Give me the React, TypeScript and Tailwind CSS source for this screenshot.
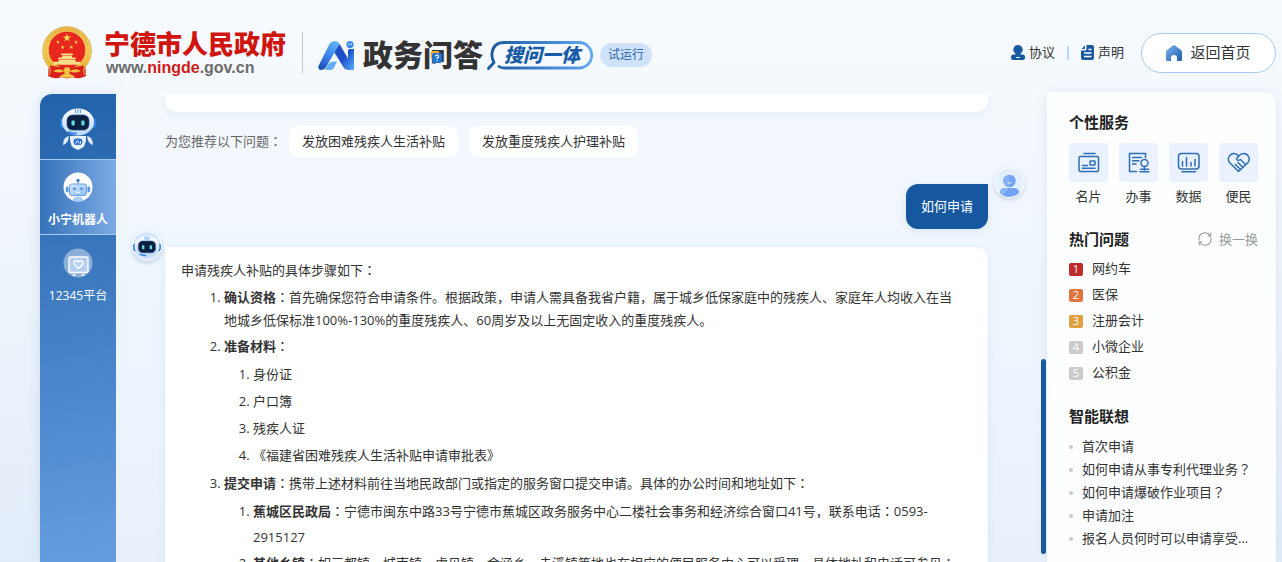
import React, { Fragment } from 'react';

const WIDE = /([：？])/;

/** Sets full-width colons and question marks in the middle of their cell. */
function Zh({ children }: { children: string }) {
  return (
    <>
      {children.split(WIDE).map((part, i) =>
        WIDE.test(part) ? (
          <span key={i} className="font-['Noto_Sans_CJK_JP',sans-serif] leading-none font-normal">
            {part}
          </span>
        ) : (
          <Fragment key={i}>{part}</Fragment>
        ),
      )}
    </>
  );
}

function Emblem() {
  return (
    <svg viewBox="0 0 50 53" className="h-[53px] w-[50px]" aria-hidden="true">
      <defs>
        <linearGradient id="gold" x1="0" y1="0" x2="0" y2="1">
          <stop offset="0" stopColor="#e8b64a" />
          <stop offset="0.5" stopColor="#f7cf58" />
          <stop offset="1" stopColor="#e6a92f" />
        </linearGradient>
      </defs>
      <path d="M7 36 L6 50 Q14 54 19 51 L25 52.5 L31 51 Q36 54 44 50 L43 36 Z" fill="#d9201c" />
      <circle cx="25" cy="25" r="24.4" fill="url(#gold)" stroke="#c9a24a" strokeWidth="0.6" />
      <circle cx="25" cy="25" r="21.3" fill="none" stroke="#dc9f31" strokeWidth="0.8" strokeDasharray="2 1.6" />
      <circle cx="25" cy="24" r="18.3" fill="#e8271f" />
      <path d="M25 7.6l1 3h3.2l-2.6 1.9 1 3.1-2.6-1.9-2.6 1.9 1-3.1-2.6-1.9h3.2z" fill="#ffd84f" />
      <g fill="#ffd84f">
        <path d="M16 14l.5 1.5H18l-1.2.9.4 1.5-1.2-.9-1.2.9.4-1.5-1.2-.9h1.5z" />
        <path d="M34 14l.5 1.5H36l-1.2.9.4 1.5-1.2-.9-1.2.9.4-1.5-1.2-.9h1.5z" />
        <path d="M20.6 19l.5 1.5h1.5l-1.2.9.4 1.5-1.2-.9-1.2.9.4-1.5-1.2-.9h1.5z" />
        <path d="M29.4 19l.5 1.5h1.5l-1.2.9.4 1.5-1.2-.9-1.2.9.4-1.5-1.2-.9h1.5z" />
      </g>
      <path d="M19.5 27.5h11l1 1.6h-13zM20 29.5h10v2H20zM17 31.5h16l1.2 1.6H15.8zM16.5 33.5h17v2.2h-17zM11 35.7h28l-1.6 3H12.6z" fill="#fbe08a" />
      <path d="M8 39.500 Q17 41.500 25 41.500 Q33 41.500 42 39.500 L41 50 Q34 52 25 50.500 Q16 52 9 50 Z" fill="#d9201c" />
      <circle cx="25" cy="44.500" r="3.300" fill="#f3c445" stroke="#d98f22" strokeWidth="0.7" />
      <path d="M11 45q6-3.500 11 0q-4 3-11 0zM39 45q-6-3.500-11 0q4 3 11 0zM17 50.500l8-4 8 4-8 1.500z" fill="#f3c445" />
      <path d="M8 42q1 5-1 7M42 42q-1 5 1 7" stroke="#f3c445" strokeWidth="1" fill="none" />
    </svg>
  );
}

function AiLogo() {
  return (
    <svg viewBox="0 0 36 29" className="h-[29px] w-9" aria-hidden="true">
      <defs>
        <linearGradient id="aiA" x1="0.7" y1="0" x2="0.2" y2="1">
          <stop offset="0" stopColor="#63b4fb" />
          <stop offset="0.55" stopColor="#3b82ee" />
          <stop offset="1" stopColor="#1d4fb4" />
        </linearGradient>
        <linearGradient id="aiB" x1="0" y1="0" x2="1" y2="1">
          <stop offset="0" stopColor="#2450c0" />
          <stop offset="0.5" stopColor="#1a4fc8" />
          <stop offset="1" stopColor="#5db0fb" />
        </linearGradient>
      </defs>
      <path d="M0.5 25 L11.5 3 Q13.5 0 16.5 0 Q20 0 21.5 3 L24 8 L18 14 L16.5 11.5 L7.5 27 Q5.5 29 3 29 Q-0.5 28.500 .5 25z" fill="url(#aiA)" />
      <path d="M21.500 3 L30 17.500 V9.500 Q30 8 32 8 H36 V29 H30.500 Q27 29 25.300 26 L16.500 11.500 Z" fill="url(#aiB)" />
      <path d="M9.500 24 Q12 20.500 16 20.500 H19 L15.500 27.500 Q14.500 29 12 29 H7 Z" fill="#62aefb" />
      <circle cx="32" cy="3.600" r="3.600" fill="#3e8bf0" />
      <circle cx="30.700" cy="3.200" r="0.700" fill="#fff" />
      <circle cx="33.400" cy="3.200" r="0.700" fill="#fff" />
    </svg>
  );
}

function SearchFrame() {
  return (
    <svg viewBox="0 0 106 29" className="absolute inset-0 h-full w-full" aria-hidden="true">
      <defs>
        <linearGradient id="frame" x1="0" y1="0" x2="1" y2="0">
          <stop offset="0" stopColor="#17579f" />
          <stop offset="1" stopColor="#63a8f3" />
        </linearGradient>
      </defs>
      <path
        d="M1.500 27.500 L7 21.500 Q4.500 17.500 5 12 Q6.500 1.500 17 1.500 H92 A12.500 12.500 0 0 1 92 27 H17 Q14 27 12 25.500"
        fill="none"
        stroke="url(#frame)"
        strokeWidth="2.800"
        strokeLinecap="round"
        strokeLinejoin="round"
      />
    </svg>
  );
}

function RobotFace({ id }: { id: string }) {
  return (
    <g>
      <defs>
        <linearGradient id={id} x1="0" y1="0" x2="0" y2="1">
          <stop offset="0" stopColor="#ffffff" />
          <stop offset="1" stopColor="#bcd8fb" />
        </linearGradient>
      </defs>
      <rect x="0" y="10" width="5" height="10" rx="2.500" fill="#2f7fe8" />
      <rect x="31" y="10" width="5" height="10" rx="2.500" fill="#2f7fe8" />
      <ellipse cx="18" cy="14" rx="16" ry="13.500" fill={`url(#${id})`} />
      <path d="M15.500 1.500v3.500M18 1v4.500M20.500 1.500v3.500" stroke="#5c9ff0" strokeWidth="1.200" />
      <rect x="7" y="7" width="22" height="15" rx="5.500" fill="#0b1f42" stroke="#26538f" strokeWidth="0.800" />
      <rect x="11.500" y="12.500" width="3.200" height="5" rx="1" fill="#5de0dc" />
      <rect x="21.300" y="12.500" width="3.200" height="5" rx="1" fill="#5de0dc" />
      <path d="M9 24 Q12 26 16 25.500" stroke="#2f7fe8" strokeWidth="1.800" fill="none" strokeLinecap="round" />
    </g>
  );
}

function RobotFull() {
  return (
    <svg viewBox="0 0 36 42" className="h-[42px] w-9" aria-hidden="true">
      <path d="M9 28 Q3 29 3 37 Q8 36 9 28zM27 28 Q33 29 33 37 Q28 36 27 28z" fill="#dfecfe" />
      <path d="M10 28 H26 Q27 40 18 42 Q9 40 10 28z" fill="#e9f2ff" />
      <rect x="13.500" y="30.500" width="9" height="6.500" rx="3" fill="#2f72d4" />
      <path d="M15.500 35.500l2-3 1.500 3M20.500 33v2.500" stroke="#fff" strokeWidth="0.900" fill="none" />
      <RobotFace id="headFull" />
    </svg>
  );
}

function RobotLight() {
  return (
    <svg viewBox="0 0 30 30" className="size-[30px]" aria-hidden="true">
      <defs>
        <clipPath id="disc">
          <circle cx="15" cy="15" r="14.500" />
        </clipPath>
        <linearGradient id="faceLight" x1="0" y1="0" x2="1" y2="1">
          <stop offset="0" stopColor="#d5e9ff" />
          <stop offset="1" stopColor="#8fbdf5" />
        </linearGradient>
      </defs>
      <circle cx="15" cy="15" r="14.500" fill="#fff" />
      <g clipPath="url(#disc)">
        <path d="M9.500 30 Q9.500 24.500 15 24.500 Q20.500 24.500 20.500 30z" fill="#a9cdf8" />
        <path d="M15 8v4" stroke="#5b98e6" strokeWidth="1" />
        <circle cx="15" cy="8.500" r="1.700" fill="#3f7fd6" />
        <rect x="2.800" y="14.500" width="2.800" height="6" rx="1.400" fill="#5b98e6" />
        <rect x="24.400" y="14.500" width="2.800" height="6" rx="1.400" fill="#5b98e6" />
        <rect x="6.500" y="12" width="17" height="11.500" rx="2.200" fill="url(#faceLight)" stroke="#5b98e6" strokeWidth="0.900" />
        <circle cx="11.500" cy="16.800" r="1.200" fill="#3f7fd6" />
        <circle cx="18.500" cy="16.800" r="1.200" fill="#3f7fd6" />
        <path d="M13 20.300h4" stroke="#fff" strokeWidth="1" />
      </g>
    </svg>
  );
}

function PlatformIcon() {
  return (
    <svg viewBox="0 0 30 30" className="size-[30px]" aria-hidden="true">
      <circle cx="15" cy="15" r="14.500" fill="#8cafd8" />
      <rect x="6" y="9" width="19" height="15.500" rx="1.500" fill="#b5d0ee" stroke="#fff" strokeWidth="1.400" />
      <path d="M15.500 20.500l-4-4a2.300 2.300 0 0 1 4-2.600 2.300 2.300 0 0 1 4 2.600z" fill="none" stroke="#fff" strokeWidth="1.400" />
      <path d="M9.500 27h3M18.500 27h3" stroke="#fff" strokeWidth="1.300" />
    </svg>
  );
}

function BotAvatar() {
  return (
    <span className="flex size-[30px] items-center justify-center overflow-hidden rounded-full border border-white bg-[#d3e6fd] shadow-[0_2px_4px_rgba(80,120,180,0.3)]">
      <svg viewBox="0 -3 36 34" className="h-[27px] w-7 shrink-0" aria-hidden="true">
        <RobotFace id="headSmall" />
      </svg>
    </span>
  );
}

function UserAvatar() {
  return (
    <span className="block size-[31px] rounded-full border border-white bg-[#e4f0fe] shadow-[0_2px_4px_rgba(80,120,180,0.25)]">
      <svg viewBox="0 0 29 29" className="h-full w-full" aria-hidden="true">
        <path d="M5 25 Q5 20 10 20 H19 Q24 20 24 25 Q20 29 14.500 29 Q9 29 5 25z" fill="#71a2f8" />
        <path d="M5 25 Q5 20 10 20 H14 L8 27.500 Q6 26.500 5 25z" fill="#8cb5fa" />
        <circle cx="14.500" cy="13" r="6.200" fill="#71a2f8" />
        <path d="M14.500 6.800a6.200 6.200 0 0 0 0 12.400z" fill="#85affa" />
        <path d="M12.700 14.500q1.800 2 3.600 0" stroke="#fff" strokeWidth="1" fill="none" strokeLinecap="round" />
      </svg>
    </span>
  );
}

function IconCard() {
  return (
    <>
      <path d="M7 2.500h11" />
      <rect x="2" y="5.500" width="19.500" height="15" rx="1.500" />
      <rect x="13" y="10" width="5" height="4" rx="0.500" />
      <path d="M5.500 14.500h5M5.500 17.300h12.500" />
    </>
  );
}
function IconForm() {
  return (
    <>
      <path d="M9.500 20.500H2.500V2.500h16v4" />
      <path d="M5.500 6.500h9M5.500 9.800h6.500M5.500 13h3.500" />
      <circle cx="17.500" cy="12" r="3.500" />
      <path d="M17.500 15.500v3.500M13.500 18.200h8M13 20.700h9" />
    </>
  );
}
function IconData() {
  return (
    <>
      <rect x="1.500" y="2.500" width="20.500" height="15.500" rx="3" />
      <path d="M5.500 10.500v4.500M9.500 6.500v8.500M14 11.500v3.500M18 8.500v6.500M5 20.700h13.500" />
    </>
  );
}
function IconCare() {
  return (
    <>
      <path d="M11.500 20.500 L2.500 11.500 C-0.500 7.500 3 2.500 7 2.500 Q9.500 2.500 11.700 5 Q14 2.500 16.500 2.500 C21 2.500 24 7.500 21 11.500 Z" />
      <path d="M11.700 5 L9.500 8 Q10.500 10.500 13.500 8.500 L18.500 13.500 M11 11.500 L16 16.500 M8.500 13.500 L13.500 18.500" />
    </>
  );
}

const services = [
  { label: '名片', icon: <IconCard /> },
  { label: '办事', icon: <IconForm /> },
  { label: '数据', icon: <IconData /> },
  { label: '便民', icon: <IconCare /> },
];

const hot = [
  { text: '网约车', color: 'bg-[#bd2b2b]' },
  { text: '医保', color: 'bg-[#e0753c]' },
  { text: '注册会计', color: 'bg-[#e1a03f]' },
  { text: '小微企业', color: 'bg-[#cbcbcb]' },
  { text: '公积金', color: 'bg-[#cbcbcb]' },
];

const related = [
  '首次申请',
  '如何申请从事专利代理业务？',
  '如何申请爆破作业项目？',
  '申请加注',
  '报名人员何时可以申请享受...',
];

function Header() {
  return (
    <header className="flex h-[92px] shrink-0 items-center pt-3 pr-1.5 pl-[42px]">
      <Emblem />
      <div className="ml-3 flex flex-col">
        <span className="text-[26px] leading-8 font-black whitespace-nowrap text-[#d0140e]">宁德市人民政府</span>
        <span className="pl-0.5 font-['Liberation_Sans',sans-serif] text-base leading-4 font-bold text-[#6b6b6b]">
          www.<span className="text-[#cf1a16]">ningde</span>.gov.cn
        </span>
      </div>
      <span className="ml-4 h-[41px] w-px bg-[#c6c9ce]" />
      <div className="ml-[15px] flex items-center pt-1.5">
        <AiLogo />
        <h1 className="relative ml-[9px] text-[30px] leading-8 font-black whitespace-nowrap text-[#333]">
          政务问答
          <svg viewBox="0 0 12 12" className="absolute top-3 left-[67px] size-3" aria-hidden="true">
            <rect x="0.500" y="0" width="9" height="8" rx="2" fill="#f3a83b" />
            <rect x="2" y="2" width="10" height="10" rx="2" fill="#2273cf" />
            <path d="M5.500 5.500q0-1.500 1.600-1.500t1.600 1.400q0 1-1.600 1.700v.8M7.100 9.300v1" stroke="#fff" strokeWidth="1.200" fill="none" />
          </svg>
        </h1>
        <span className="relative ml-1 flex h-[29px] w-[106px] items-center justify-center pl-1 text-[19px] leading-7 font-black whitespace-nowrap text-[#1a5ba8] italic">
          <SearchFrame />
          搜问一体
        </span>
        <span className="ml-[7px] flex h-6 items-center rounded-full bg-[#cfe2f9] px-2 text-xs whitespace-nowrap text-[#2a66ad]">试运行</span>
      </div>
      <nav className="ml-auto flex items-center pt-px text-[13px] whitespace-nowrap text-[#333]">
        <a href="#agreement" className="flex items-center gap-1">
          <svg viewBox="0 0 14 15" className="h-[15px] w-3.5" aria-hidden="true">
            <circle cx="7" cy="4.700" r="4.700" fill="#1859a1" />
            <path d="M4.500 7h5v2.500h2A2.500 2.500 0 0 1 14 12v1a2 2 0 0 1-2 2H2a2 2 0 0 1-2-2v-1a2.500 2.500 0 0 1 2.500-2.500h2z" fill="#1859a1" />
            <path d="M5 12.500h4" stroke="#fff" strokeWidth="1" />
          </svg>
          协议
        </a>
        <span className="mx-3 h-3.5 w-0.5 bg-[#bfd8f5]" />
        <a href="#statement" className="flex items-center gap-1">
          <svg viewBox="0 0 13 15" className="h-[15px] w-[13px]" aria-hidden="true">
            <path d="M5.500 0H11a2 2 0 0 1 2 2v11a2 2 0 0 1-2 2H2a2 2 0 0 1-2-2V5.500h4a1.500 1.500 0 0 0 1.500-1.500z" fill="#1859a1" />
            <path d="M4 0.500V3a1 1 0 0 1-1 1H0.500z" fill="#1859a1" />
            <path d="M7.500 4.500h3M3 8h7.500M3 11.500h7.500" stroke="#fff" strokeWidth="1.300" />
          </svg>
          声明
        </a>
        <a
          href="#home"
          className="ml-[17px] flex h-10 w-[135px] items-center justify-center gap-2 rounded-full border border-[#a9cbf3] bg-white text-[15px]"
        >
          <svg viewBox="0 0 16 16" className="size-4" aria-hidden="true">
            <defs>
              <linearGradient id="house" x1="0" y1="0" x2="1" y2="1">
                <stop offset="0" stopColor="#7ab3ee" />
                <stop offset="1" stopColor="#1f5faa" />
              </linearGradient>
            </defs>
            <path d="M7 .5Q8-.3 9 .5L15 5q1 .8 1 2v7.500a1.500 1.500 0 0 1-1.500 1.500H11v-3a3 3 0 0 0-6 0v3H1.500A1.500 1.500 0 0 1 0 14.500V7q0-1.200 1-2z" fill="url(#house)" />
          </svg>
          返回首页
        </a>
      </nav>
    </header>
  );
}

function SideNav() {
  return (
    <nav className="mt-0.5 flex w-[76px] shrink-0 flex-col rounded-tl-xl bg-linear-170 from-[#2162aa] to-[#659ee0] text-xs whitespace-nowrap text-white shadow-[0_0_12px_rgba(120,150,190,0.25)]">
      <div className="flex h-[65px] items-center justify-center pt-1">
        <RobotFull />
      </div>
      <a
        href="#robot"
        className="flex h-[76px] flex-col items-center border-y border-[#a9c9ef] bg-linear-to-r from-[#3572b8] to-[#7cabe7] pt-3 font-bold"
      >
        <RobotLight />
        <span className="mt-2 leading-5">小宁机器人</span>
      </a>
      <a href="#platform" className="flex flex-col items-center pt-[13px]">
        <PlatformIcon />
        <span className="mt-2 leading-5">12345平台</span>
      </a>
    </nav>
  );
}

function Answer() {
  return (
    <article className="mt-4 rounded-r-xl bg-white pt-[11px] pr-7 pl-4 shadow-[0_2px_8px_rgba(120,160,210,0.14)]">
      <p className="leading-6">
        <Zh>申请残疾人补贴的具体步骤如下：</Zh>
      </p>
      <ol className="mt-1 list-decimal space-y-[3px] pl-[43px] leading-[23px]">
        <li>
          <strong>确认资格</strong>
          <Zh>：首先确保您符合申请条件。根据政策，申请人需具备我省户籍，属于城乡低保家庭中的残疾人、家庭年人均收入在当地城乡低保标准100%-130%的重度残疾人、60周岁及以上无固定收入的重度残疾人。</Zh>
        </li>
        <li>
          <strong>准备材料</strong>
          <Zh>：</Zh>
          <ol className="mt-[3px] list-decimal pl-[29px] leading-[27px]">
            <li>身份证</li>
            <li>户口簿</li>
            <li>残疾人证</li>
            <li>《福建省困难残疾人生活补贴申请审批表》</li>
          </ol>
        </li>
        <li>
          <strong>提交申请</strong>
          <Zh>：携带上述材料前往当地民政部门或指定的服务窗口提交申请。具体的办公时间和地址如下：</Zh>
          <ol className="mt-[3px] list-decimal pl-[29px] leading-[26px]">
            <li>
              <strong>蕉城区民政局</strong>
              <Zh>：宁德市闽东中路33号宁德市蕉城区政务服务中心二楼社会事务和经济综合窗口41号，联系电话：0593-</Zh>
              <wbr />
              2915127
            </li>
            <li>
              <strong>其他乡镇</strong>
              <Zh>：如三都镇、城南镇、虎贝镇、金涵乡、赤溪镇等地也在相应的便民服务中心可以受理，具体地址和电话可参见：</Zh>
            </li>
          </ol>
        </li>
      </ol>
    </article>
  );
}

function Chat() {
  return (
    <section className="mt-0.5 flex min-w-0 flex-1 border-t border-white bg-linear-to-b from-[#f4f8fd] via-[#eef5fd] to-[#e8f1fb]">
      <div className="min-w-0 flex-1 overflow-hidden pr-4 pl-4 text-[13px] text-[#333]">
        <div className="mr-[37px] ml-[33px] h-[17px] rounded-b-xl bg-white shadow-[0_2px_8px_rgba(120,160,210,0.14)]" />
        <div className="mt-3.5 ml-[33px] flex items-center gap-[11px] whitespace-nowrap">
          <span className="-mr-1 text-[#666]">
            <Zh>为您推荐以下问题：</Zh>
          </span>
          <button className="h-[31px] rounded-lg bg-white px-[13px]">发放困难残疾人生活补贴</button>
          <button className="h-[31px] rounded-lg bg-white px-[13px]">发放重度残疾人护理补贴</button>
        </div>
        <div className="mt-2.5 flex items-start justify-end gap-1.5">
          <p className="mt-[17px] flex h-[45px] items-center rounded-xl rounded-tr-none bg-[#16589f] px-[15px] text-white shadow-[0_2px_8px_rgba(120,160,210,0.2)]">
            如何申请
          </p>
          <UserAvatar />
        </div>
        <div className="mt-0.5 grid grid-cols-[30px_1fr] gap-[3px] pr-[37px]">
          <BotAvatar />
          <Answer />
        </div>
      </div>
      <div className="mt-[264px] mr-px h-[195px] w-[5px] shrink-0 rounded-full bg-[#16589f]" />
    </section>
  );
}

function Aside() {
  return (
    <aside className="w-[229px] shrink-0 rounded-tr-xl bg-[#fdfeff] pt-[19px] pr-[18px] pl-[22px] text-[13px] whitespace-nowrap text-[#333] shadow-[0_0_12px_rgba(120,150,190,0.15)]">
      <h2 className="text-[15px] leading-[22px] font-bold text-[#222]">个性服务</h2>
      <ul className="mt-2.5 flex justify-between">
        {services.map((s) => (
          <li key={s.label}>
            <a href="#service" className="flex flex-col items-center">
              <span className="flex size-[39px] items-center justify-center rounded bg-[#e9f2fe]">
                <svg
                  viewBox="0 0 23 23"
                  className="size-[23px]"
                  fill="none"
                  stroke="#2f6db4"
                  strokeWidth="1.500"
                  strokeLinecap="round"
                  strokeLinejoin="round"
                  aria-hidden="true"
                >
                  {s.icon}
                </svg>
              </span>
              <span className="mt-1 leading-5">{s.label}</span>
            </a>
          </li>
        ))}
      </ul>
      <div className="mt-[22px] flex items-center justify-between">
        <h2 className="text-[15px] leading-[22px] font-bold text-[#222]">热门问题</h2>
        <button className="flex items-center gap-[7px] leading-5 text-[#999]">
          <svg viewBox="0 0 14 14" className="size-3.5" fill="none" stroke="#999" strokeWidth="1.100" aria-hidden="true">
            <path d="M1 8.500V6.500A6 6 0 0 1 12 3.500M12.700 .8V4H9.700M13 5.500V7.500A6 6 0 0 1 2 10.500M1.300 13.200V10H4.300" />
          </svg>
          换一换
        </button>
      </div>
      <ol className="mt-1.5">
        {hot.map((h, i) => (
          <li key={h.text} className="flex h-[26px] items-center gap-[9px]">
            <span className={`flex h-[13px] w-3.5 items-center justify-center rounded-xs text-[11px] leading-3 text-white ${h.color}`}>{i + 1}</span>
            <a href="#question">{h.text}</a>
          </li>
        ))}
      </ol>
      <h2 className="mt-[19px] text-[15px] leading-[22px] font-bold text-[#222]">智能联想</h2>
      <ul className="mt-2">
        {related.map((t) => (
          <li key={t} className="flex h-[23px] items-center gap-[9px]">
            <span className="size-1 rounded-full bg-[#c9c9c9]" />
            <a href="#related">
              <Zh>{t}</Zh>
            </a>
          </li>
        ))}
      </ul>
    </aside>
  );
}

export default function App() {
  return (
    <div className="flex h-screen flex-col overflow-hidden bg-linear-to-b from-[#f7fbff] via-[#eef4fb] to-[#e3edf9] font-['Open_Sans','Noto_Sans_CJK_SC',sans-serif]">
      <Header />
      <main className="flex min-h-0 flex-1 pr-1.5 pl-10">
        <SideNav />
        <Chat />
        <Aside />
      </main>
    </div>
  );
}
